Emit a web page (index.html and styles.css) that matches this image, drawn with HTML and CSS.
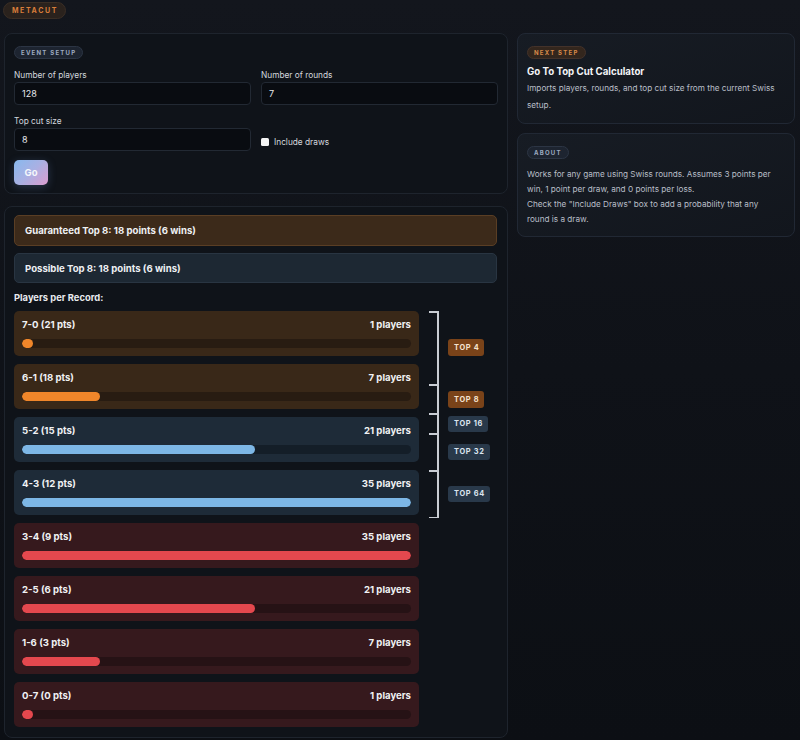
FILE: index.html
```html
<!DOCTYPE html>
<html>
<head>
<meta charset="utf-8">
<link rel="stylesheet" href="styles.css">
</head>
<body>
<div class="page">
  <header class="top">
    <span class="pill pill-brand">METACUT</span>
  </header>
  <div class="layout">
    <div class="col-left">
      <section class="panel setup">
        <span class="pill pill-slate">EVENT SETUP</span>
        <div class="form-grid">
          <label class="field">
            <span class="field-label">Number of players</span>
            <span class="input">128</span>
          </label>
          <label class="field">
            <span class="field-label">Number of rounds</span>
            <span class="input">7</span>
          </label>
          <label class="field">
            <span class="field-label">Top cut size</span>
            <span class="input">8</span>
          </label>
          <label class="check">
            <span class="box"></span>
            <span class="check-label">Include draws</span>
          </label>
        </div>
        <button class="go">Go</button>
      </section>

      <section class="panel results">
        <div class="callout callout-orange">Guaranteed Top 8: 18 points (6 wins)</div>
        <div class="callout callout-blue">Possible Top 8: 18 points (6 wins)</div>
        <div class="section-title">Players per Record:</div>
        <div class="records">
          <div class="rows">
            <div class="row row-orange"><div class="row-head"><span>7-0 (21 pts)</span><span>1 players</span></div><div class="track"><div class="fill" style="width:2.9%"></div></div></div>
            <div class="row row-orange"><div class="row-head"><span>6-1 (18 pts)</span><span>7 players</span></div><div class="track"><div class="fill" style="width:20%"></div></div></div>
            <div class="row row-blue"><div class="row-head"><span>5-2 (15 pts)</span><span>21 players</span></div><div class="track"><div class="fill" style="width:60%"></div></div></div>
            <div class="row row-blue"><div class="row-head"><span>4-3 (12 pts)</span><span>35 players</span></div><div class="track"><div class="fill" style="width:100%"></div></div></div>
            <div class="row row-red"><div class="row-head"><span>3-4 (9 pts)</span><span>35 players</span></div><div class="track"><div class="fill" style="width:100%"></div></div></div>
            <div class="row row-red"><div class="row-head"><span>2-5 (6 pts)</span><span>21 players</span></div><div class="track"><div class="fill" style="width:60%"></div></div></div>
            <div class="row row-red"><div class="row-head"><span>1-6 (3 pts)</span><span>7 players</span></div><div class="track"><div class="fill" style="width:20%"></div></div></div>
            <div class="row row-red"><div class="row-head"><span>0-7 (0 pts)</span><span>1 players</span></div><div class="track"><div class="fill" style="width:2.9%"></div></div></div>
          </div>
          <div class="bracket">
            <div class="vline"></div>
            <div class="tick t1"></div>
            <div class="tick t2"></div>
            <div class="tick t3"></div>
            <div class="tick t4"></div>
            <div class="tick t5"></div>
            <div class="tick t6"></div>
            <span class="badge badge-orange b4">TOP 4</span>
            <span class="badge badge-orange b8">TOP 8</span>
            <span class="badge badge-slate b16">TOP 16</span>
            <span class="badge badge-slate b32">TOP 32</span>
            <span class="badge badge-slate b64">TOP 64</span>
          </div>
        </div>
      </section>
    </div>

    <div class="col-right">
      <section class="card next">
        <span class="pill pill-orange">NEXT STEP</span>
        <h2 class="card-title">Go To Top Cut Calculator</h2>
        <p class="card-text">Imports players, rounds, and top cut size from the current Swiss setup.</p>
      </section>
      <section class="card about">
        <span class="pill pill-slate">ABOUT</span>
        <p class="card-text tight">Works for any game using Swiss rounds. Assumes 3 points per win, 1 point per draw, and 0 points per loss.<br>Check the "Include Draws" box to add a probability that any round is a draw.</p>
      </section>
    </div>
  </div>
</div>
</body>
</html>
```

FILE: styles.css
```css
* { box-sizing: border-box; }

html, body {
  margin: 0;
  padding: 0;
}

body {
  width: 800px;
  height: 740px;
  overflow: hidden;
  background: linear-gradient(180deg, #13161d 0%, #0f1218 50%, #0c0f14 100%);
  font-family: Inter, "Noto Sans", "Liberation Sans", sans-serif;
  color: #e8eaee;
}

.page {
  padding: 2px 5px 0 4px;
}

.top {
  display: flex;
  align-items: flex-start;
  height: 31px;
}

.pill {
  display: flex;
  align-items: center;
  width: fit-content;
  height: 13px;
  padding: 0 6px;
  border-radius: 7px;
  font-size: 6px;
  font-weight: 700;
  letter-spacing: 1.25px;
  line-height: 1;
}

.pill-brand {
  height: 17px;
  margin-left: -1px;
  padding: 0 7px 0 8px;
  border-radius: 9px;
  font-size: 7px;
  letter-spacing: 1.6px;
  color: #d97d3a;
  background: #2a221d;
  border: 1px solid #3a2e25;
}

.pill-slate {
  color: #9eabc0;
  background: #1d2430;
  border: 1px solid #2c3544;
}

.pill-orange {
  color: #d98a4a;
  background: #33261d;
  border: 1px solid #43322a;
}

.layout {
  display: grid;
  grid-template-columns: 504px 278px;
  gap: 9px;
}

.col-left, .col-right {
  display: flex;
  flex-direction: column;
}

.col-left { gap: 12px; }
.col-right { gap: 9px; }

.panel {
  background: #0f1319;
  border: 1px solid #1e242d;
  border-radius: 8px;
}

.setup {
  padding: 12px 10px 9px 9px;
  height: 161px;
}

.form-grid {
  display: grid;
  grid-template-columns: 237px 237px;
  column-gap: 10px;
  row-gap: 10px;
  margin-top: 10px;
}

.field {
  display: flex;
  flex-direction: column;
}

.field-label {
  font-size: 8.3px;
  color: #d4d8de;
  height: 13px;
  line-height: 13px;
}

.input {
  display: flex;
  align-items: center;
  height: 23px;
  padding: 0 7px;
  background: #090c11;
  border: 1px solid #222933;
  border-radius: 4px;
  font-size: 9px;
  color: #e6e8eb;
}

.check {
  display: flex;
  align-items: center;
  gap: 5px;
  padding-top: 17px;
}

.box {
  width: 8px;
  height: 8px;
  background: #f4f4f4;
  border-radius: 1.5px;
}

.check-label {
  font-size: 8.3px;
  color: #d4d8de;
}

.go {
  display: block;
  margin-top: 9px;
  width: 34px;
  height: 25px;
  border: none;
  border-radius: 5px;
  background: linear-gradient(135deg, #88b9ee 0%, #a9b0e3 50%, #dc9ccf 100%);
  color: #f4f6fb;
  font-family: Inter, "Noto Sans", sans-serif;
  font-size: 9.5px;
  font-weight: 700;
  box-shadow: 0 2px 8px rgba(120, 160, 230, 0.25);
  padding: 0;
}

.results {
  padding: 8px 10px 10px 9px;
}

.callout {
  display: flex;
  align-items: center;
  padding: 0 10px;
  border-radius: 5px;
  font-size: 9.6px;
  font-weight: 700;
  color: #eef0f3;
}

.callout-orange {
  height: 31px;
  background: #3c2a1a;
  border: 1px solid #5a3e24;
}

.callout-blue {
  height: 30px;
  margin-top: 7px;
  background: #1d2833;
  border: 1px solid #293542;
}

.section-title {
  margin-top: 10px;
  height: 10px;
  line-height: 10px;
  font-size: 9.4px;
  font-weight: 700;
  color: #e8eaee;
}

.records {
  display: flex;
  margin-top: 8px;
}

.rows {
  width: 405px;
  display: flex;
  flex-direction: column;
  gap: 8px;
}

.row {
  height: 45px;
  padding: 7px 8px 0 8px;
  border-radius: 5px;
}

.row-head {
  display: flex;
  justify-content: space-between;
  font-size: 9.6px;
  font-weight: 700;
  color: #f0f1f3;
  height: 13px;
  line-height: 13px;
}

.track {
  margin-top: 8px;
  height: 9px;
  border-radius: 5px;
  overflow: hidden;
}

.fill {
  height: 100%;
  border-radius: 5px;
  min-width: 10px;
}

.row-orange { background: #392818; }
.row-orange .track { background: #281c12; }
.row-orange .fill { background: #f0862a; }

.row-blue { background: #1e2b38; }
.row-blue .track { background: #141e28; }
.row-blue .fill { background: #7db7e6; }

.row-red { background: #36191d; }
.row-red .track { background: #261215; }
.row-red .fill { background: #e4484e; }

.bracket {
  position: relative;
  flex: 1;
}

.vline {
  position: absolute;
  left: 18px;
  top: 0;
  width: 1.5px;
  height: 207px;
  background: #c9cdd3;
}

.tick {
  position: absolute;
  left: 10px;
  width: 9px;
  height: 1.5px;
  background: #c9cdd3;
}

.t1 { top: 0; }
.t2 { top: 73px; }
.t3 { top: 102px; }
.t4 { top: 122px; }
.t5 { top: 159px; }
.t6 { top: 205.5px; }

.badge {
  position: absolute;
  left: 29px;
  height: 17px;
  display: flex;
  align-items: center;
  padding: 0 5px 0 6px;
  border-radius: 3px;
  font-size: 7.4px;
  font-weight: 700;
  letter-spacing: 0.7px;
  line-height: 1;
}

.badge-orange {
  background: #7a4319;
  color: #f6e3d0;
}

.badge-slate {
  background: #29394a;
  color: #dbe5ef;
}

.b4 { top: 28px; }
.b8 { top: 80px; }
.b16 { top: 105px; height: 16px; }
.b32 { top: 133px; height: 16px; }
.b64 { top: 175px; height: 16px; }

.card {
  background: linear-gradient(160deg, #171c24 0%, #12161d 100%);
  border: 1px solid #212834;
  border-radius: 8px;
  padding: 12px 8px 10px 9px;
}

.next {
  height: 91px;
}

.card-title {
  margin: 6px 0 0 0;
  font-size: 9.7px;
  font-weight: 700;
  color: #f3f4f6;
  line-height: 13px;
}

.card-text {
  margin: 2px 0 0 0;
  font-size: 8.2px;
  color: #b9bfc8;
  line-height: 17px;
}

.about {
  height: 104px;
  padding-right: 17px;
}

.card-text.tight {
  margin-top: 8px;
  line-height: 15px;
}
```
